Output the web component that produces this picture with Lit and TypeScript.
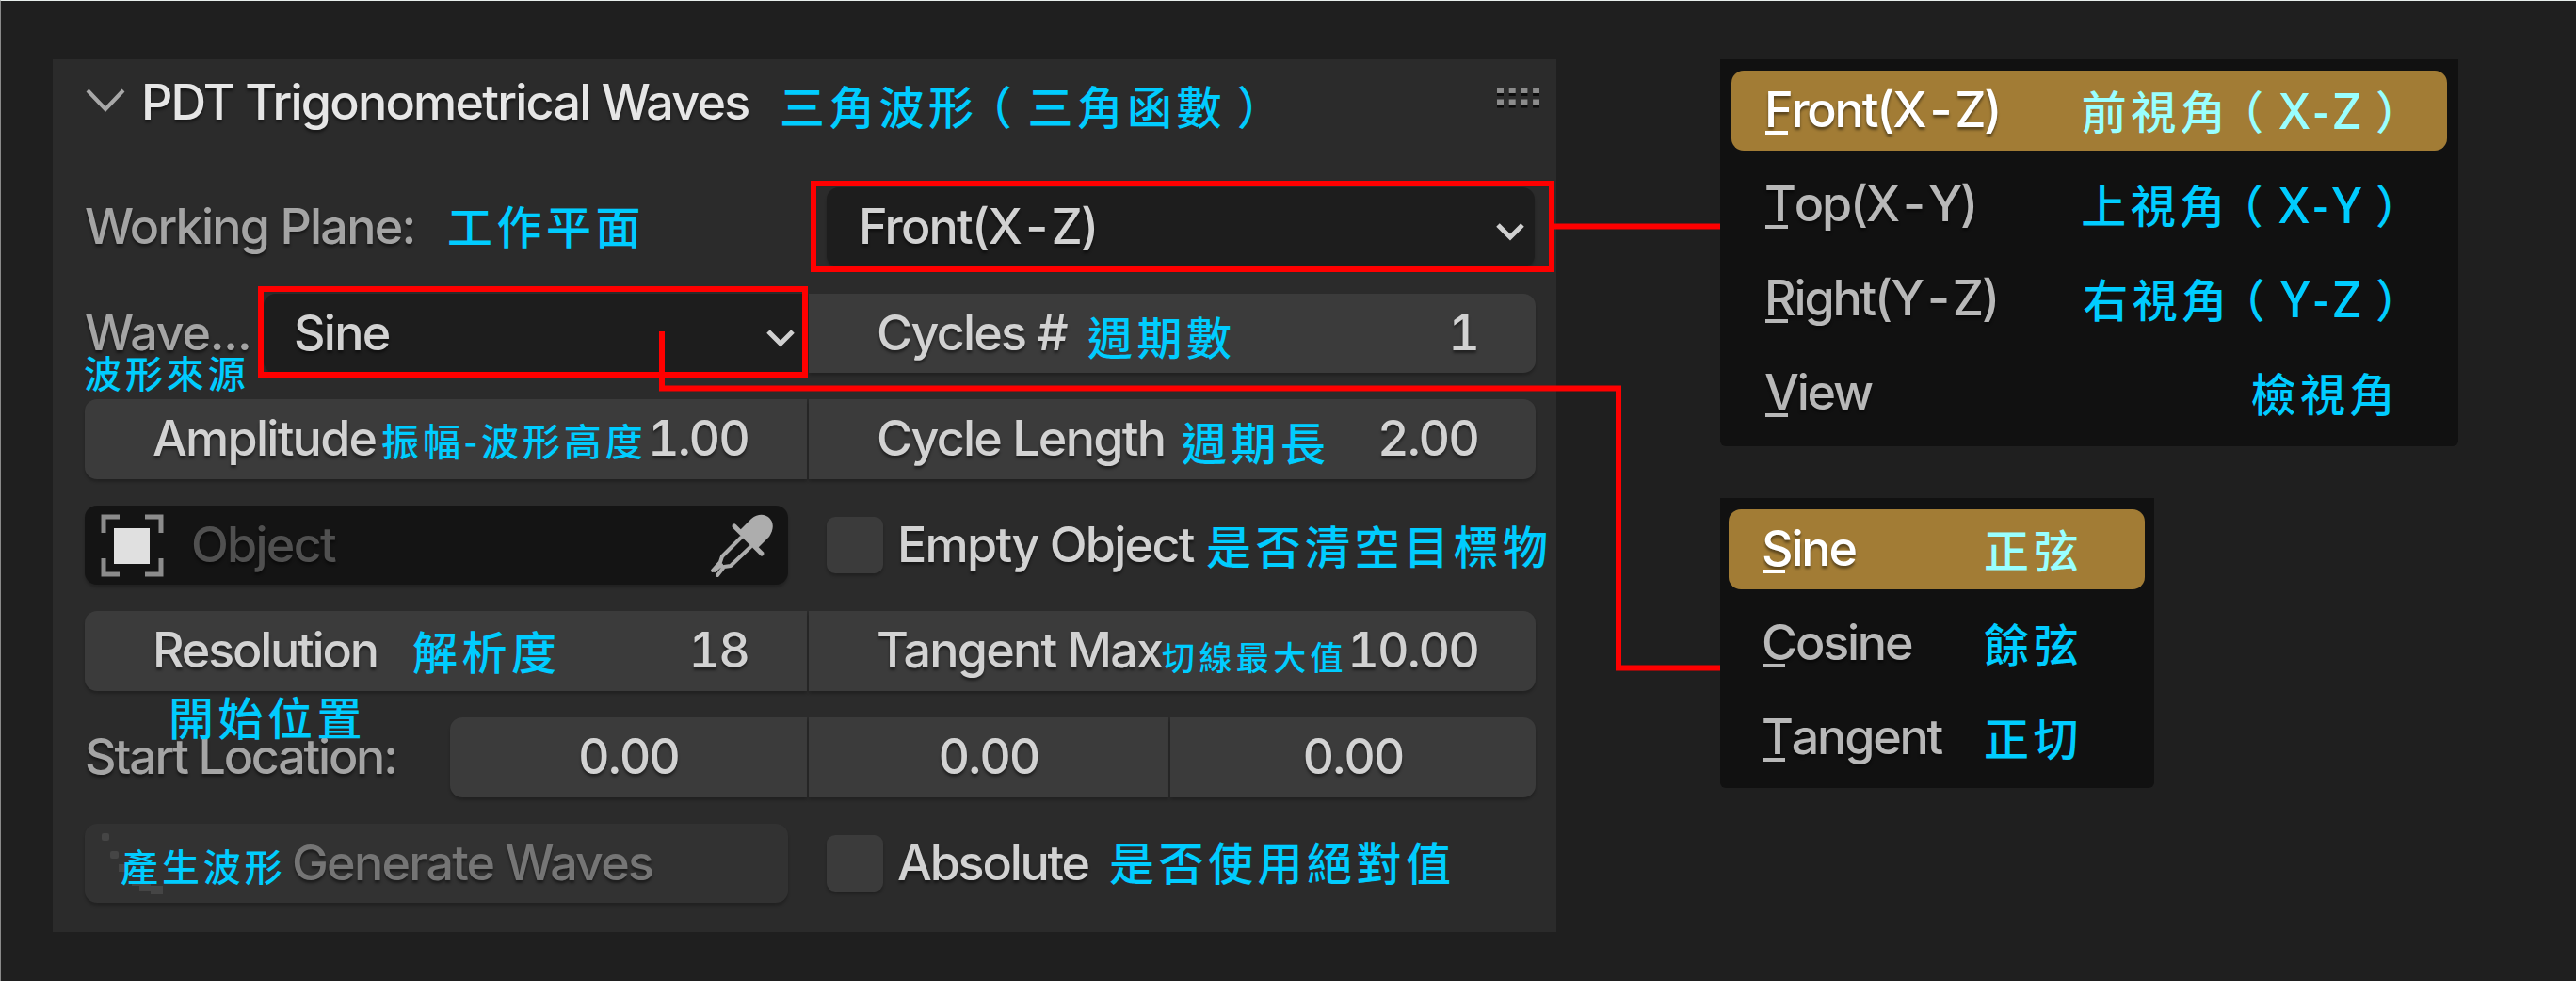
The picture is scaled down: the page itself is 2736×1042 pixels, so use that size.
import { LitElement, html, css, svg, nothing } from "lit";
import { customElement, property } from "lit/decorators.js";

const textStyles = css`
  .t {
    font: 500 52px/83px Inter, "Liberation Sans", sans-serif;
    letter-spacing: -1.75px;
    color: #d2d2d2;
    white-space: pre;
    text-shadow: 0 3px 3px rgba(0, 0, 0, 0.45);
    height: 84px;
    flex: none;
  }
  .t.v { letter-spacing: -2px; font-variant-numeric: tabular-nums; }
  .t.tight { letter-spacing: -2.2px; }
  .t.loose { letter-spacing: -1.2px; }
  .zh {
    font: 500 48px/78px "Noto Sans CJK TC", sans-serif;
    letter-spacing: 4.5px;
    color: #00ccff;
    white-space: pre;
    flex: none;
    height: 78px;
  }
  .zh.small { font-size: 40px; letter-spacing: 3.9px; }
  .zh.tiny { font-size: 35px; letter-spacing: 4.4px; }
  .po { display: inline-block; transform: translateX(-0.25em); }
  .pc { display: inline-block; transform: translateX(0.24em); }
  .latin { font-family: "Noto Sans", "Open Sans", sans-serif; font-size: 53px; font-weight: 500; line-height: 1px; letter-spacing: 3.6px; }
  .dash { margin: 0 5px; }
`;

const dashed = (s: string) => {
  const parts = s.split("-");
  return parts.length === 1 ? s : html`${parts[0]}<span class="dash">-</span>${parts[1]}`;
};

interface Entry {
  key: string;
  rest: string;
  zh: string;
  axes?: string;
}

@customElement("drop-menu")
class DropMenu extends LitElement {
  @property({ attribute: false }) entries: Entry[] = [];

  static styles = [
    textStyles,
    css`
      :host { display: flex; flex-direction: column; gap: 15px; background: #111; box-sizing: border-box; border-radius: 0 0 6px 6px; }
      .item { height: 85px; border-radius: 13px; display: flex; justify-content: space-between; padding: var(--pad, 0 55px 0 35px); }
      .on { background: #a27c35; }
      .item.on .t { color: #fff; }
      .on .zh { color: #99ffff; }
      .t { color: #b8b8b8; letter-spacing: -2.2px; }
      .key { display: inline-block; position: relative; }
      .key::after { content: ""; position: absolute; left: 1px; top: 64px; width: 24px; height: 4px; background: currentColor; }
      .zh { margin-right: -4px; padding-top: 2px; }
      .pc { margin-right: -16px; }
    `,
  ];

  render() {
    return this.entries.map(
      (e, i) => html`<div class="item ${i === 0 ? "on" : ""}">
        <span class="t"><span class="key">${e.key}</span>${dashed(e.rest)}</span>
        <span class="zh">${e.zh}${e.axes
          ? html`<span class="po">（</span><span class="latin">${e.axes}</span><span class="pc">）</span>`
          : nothing}</span>
      </div>`
    );
  }
}

const chevron = html`<svg class="chev" width="30" height="20" viewBox="0 0 30 20"><path d="M2 2 L15 15 L28 2" fill="none" stroke="#d0d0d0" stroke-width="5" /></svg>`;

@customElement("app-root")
class AppRoot extends LitElement {
  static styles = [
    textStyles,
    css`
      :host { display: block; }
      .page {
        position: relative; width: 2736px; height: 1042px; box-sizing: border-box; overflow: hidden;
        background: #1f1f1f; border-top: 1px solid #e8eeec; border-left: 1px solid #8a8a8a;
        padding: 62px 0 0 55px; display: flex; align-items: flex-start; gap: 174px;
      }
      .panel { width: 1597px; height: 927px; background: #2b2b2b; box-sizing: border-box; padding: 0 18px 0 34px; flex: none; }
      .head { height: 136px; display: flex; padding-top: 4px; box-sizing: border-box; }
      .head .t { color: #e6e6e6; width: 678px; padding-left: 17px; }
      .head .zh { flex: 1; padding-top: 5px; letter-spacing: 4.7px; }
      .head svg { margin-top: 26px; flex: none; }
      .rows { display: grid; grid-auto-rows: 84.6px; row-gap: 28px; }
      .row { display: grid; grid-template-columns: 767px 772px; column-gap: 2px; position: relative; }
      .cell { display: flex; min-width: 0; }
      .field { background: #3b3b3b; box-shadow: 0 3px 3px rgba(0, 0, 0, 0.22); height: 84.6px; box-sizing: border-box; }
      .l { border-radius: 13px 0 0 13px; }
      .r { border-radius: 0 13px 13px 0; }
      .full { border-radius: 13px; }
      .num { display: flex; }
      .num.l { padding: 0 62px 0 72px; }
      .num.r { padding: 0 61px 0 72px; }
      .num .v { margin-left: auto; }
      .mid { display: flex; justify-content: center; }
      .row .lab { color: #a4a4a4; }
      .dark { background: #1d1d1d; }
      .drop { display: flex; justify-content: space-between; }
      .drop svg { margin-top: 38px; }
      .ins { margin-left: 19px; }
      .plane { width: 752px; padding: 0 11px 0 34px; }
      .wave { width: 576px; padding: 0 12px 0 32px; }
      .w383 { width: 385px; }
      .w190 { width: 190px; }
      .object { width: 747px; background: #141414; padding: 0 15px 0 17px; align-items: center; }
      .object .t { color: #505050; flex: 1; padding-left: 29px; }
      .box { width: 60px; height: 60px; border-radius: 9px; margin-top: 12px; flex: none; }
      .check .t { padding-left: 15px; }
      .gen { width: 747px; background: #323232; display: flex; padding-left: 17px; align-items: center; }
      .gen .t { color: #757575; padding-left: 135px; }
      .start { grid-template-columns: 386px 379px 382px 388px; }
      .over { position: absolute; }
      .n1 { left: -1px; top: 44px; }
      .n2 { left: 89px; top: -41px; }
      .n3 { left: 38px; top: 5px; }
      .menus { display: flex; flex-direction: column; align-items: flex-start; gap: 55px; }
      .m1 { width: 784px; height: 411px; padding: 12px 12px 0; }
      .m2 { width: 461px; height: 308px; padding: 12px 10px 0 9px; --pad: 0 70px 0 35px; }
      .lines { position: absolute; left: -1px; top: -1px; }
    `,
  ];

  private num(side: string, label: string, zh: string, value: string, gap: number, drop = 2, size = "", fit = "") {
    return html`<div class="field num ${side}">
      <span class="t ${fit}" style="width:${gap}px">${label}</span>
      <span class="zh ${size}" style="padding-top:${drop}px">${zh}</span>
      <span class="t v">${value}</span>
    </div>`;
  }

  render() {
    const dots = [0, 1, 2, 3].flatMap((c) =>
      [0, 1].map((r) => svg`<rect x=${c * 12.7} y=${r * 12.5 + 5} width="7" height="4" fill="#0c0c0c"/><rect x=${c * 12.7} y=${r * 12.5} width="7" height="6" fill="#8c8c8c"/>`)
    );
    return html`<div class="page">
      <section class="panel">
        <header class="head">
          <svg width="43" height="28" viewBox="0 0 43 28"><path d="M3 3 L22 23 L41 3" fill="none" stroke="#a8a8a8" stroke-width="4" /></svg>
          <span class="t">PDT Trigonometrical Waves</span>
          <span class="zh">三角波形<span class="po">（</span>三角函數<span class="pc">）</span></span>
          <svg width="45" height="24">${dots}</svg>
        </header>
        <div class="rows">
          <div class="row">
            <div class="cell"><span class="t lab w383">Working Plane:</span><span class="zh">工作平面</span></div>
            <div class="field full dark drop plane ins"><span class="t">${dashed("Front(X-Z)")}</span>${chevron}</div>
          </div>
          <div class="row">
            <div class="cell"><span class="t lab loose w190">Wave...</span>
              <div class="field l dark drop wave"><span class="t">Sine</span>${chevron}</div></div>
            ${this.num("r", "Cycles #", "週期數", "1", 224, 5)}
            <span class="zh small over n1">波形來源</span>
          </div>
          <div class="row">
            ${this.num("l", "Amplitude", "振幅-波形高度", "1.00", 243, 4, "small")}
            ${this.num("r", "Cycle Length", "週期長", "2.00", 324, 5)}
          </div>
          <div class="row">
            <div class="cell field full object">
              <svg width="67" height="67" viewBox="0 0 67 67"><path d="M3 20V3H20M47 3H64V20M64 47V64H47M20 64H3V47" fill="none" stroke="#8c8c8c" stroke-width="5" /><rect x="14" y="15" width="38" height="38" fill="#e0e0e0" /></svg>
              <span class="t">Object</span>
              <svg width="68" height="68" viewBox="0 0 68 68"><path d="M31 19 L44 6 C51 0 59 1 63 5 C68 10 68 17 63 25 L50 38Z" fill="#adadad" /><path d="M26 14 L55 43" fill="none" stroke="#adadad" stroke-width="5" stroke-linecap="round" /><path d="M33 26 L13 46 L11 52 L3 61 M8 66 L15 57 L22 56 L43 36 M5 61 L12 55" fill="none" stroke="#adadad" stroke-width="4" stroke-linejoin="round" stroke-linecap="round" /></svg>
            </div>
            <div class="cell check ins"><div class="field box"></div><span class="t" style="width:328px">Empty Object</span><span class="zh" style="padding-top:2px">是否清空目標物</span></div>
          </div>
          <div class="row">
            ${this.num("l", "Resolution", "解析度", "18", 276, 2, "", "tight")}
            ${this.num("r", "Tangent Max", "切線最大值", "10.00", 303, 9, "tiny")}
          </div>
          <div class="row start">
            <span class="t lab tight">Start Location:</span>
            <div class="field l mid"><span class="t v">0.00</span></div>
            <div class="field mid"><span class="t v">0.00</span></div>
            <div class="field r mid"><span class="t v">0.00</span></div>
            <span class="zh over n2">開始位置</span>
          </div>
          <div class="row">
            <div class="field full gen">
              <svg width="68" height="68" viewBox="0 0 68 68" fill="#454545"><rect x="1" y="2" width="8" height="8" rx="2" /><rect x="10" y="21" width="9" height="8" rx="2" /><rect x="19" y="35" width="9" height="8" /><path d="M33 54h20v4h13v9H53v-4H41v-5h-8z" /></svg>
              <span class="t">Generate Waves</span>
            </div>
            <div class="cell check ins"><div class="field box"></div><span class="t tight" style="width:225px">Absolute</span><span class="zh">是否使用絕對值</span></div>
            <span class="zh small over n3">產生波形</span>
          </div>
        </div>
      </section>
      <div class="menus">
        <drop-menu class="m1" .entries=${[
          { key: "F", rest: "ront(X-Z)", zh: "前視角", axes: "X-Z" },
          { key: "T", rest: "op(X-Y)", zh: "上視角", axes: "X-Y" },
          { key: "R", rest: "ight(Y-Z)", zh: "右視角", axes: "Y-Z" },
          { key: "V", rest: "iew", zh: "檢視角" },
        ]}></drop-menu>
        <drop-menu class="m2" .entries=${[
          { key: "S", rest: "ine", zh: "正弦" },
          { key: "C", rest: "osine", zh: "餘弦" },
          { key: "T", rest: "angent", zh: "正切" },
        ]}></drop-menu>
      </div>
      <svg class="lines" width="2736" height="1042" fill="none" stroke="#ff0000" stroke-width="6">
        <rect x="864" y="195" width="784" height="91" />
        <path d="M1651 240.5H1827" />
        <rect x="277" y="307" width="578" height="91" />
        <path d="M703 352V412.5H1719V709.5H1827" />
      </svg>
    </div>`;
  }
}
